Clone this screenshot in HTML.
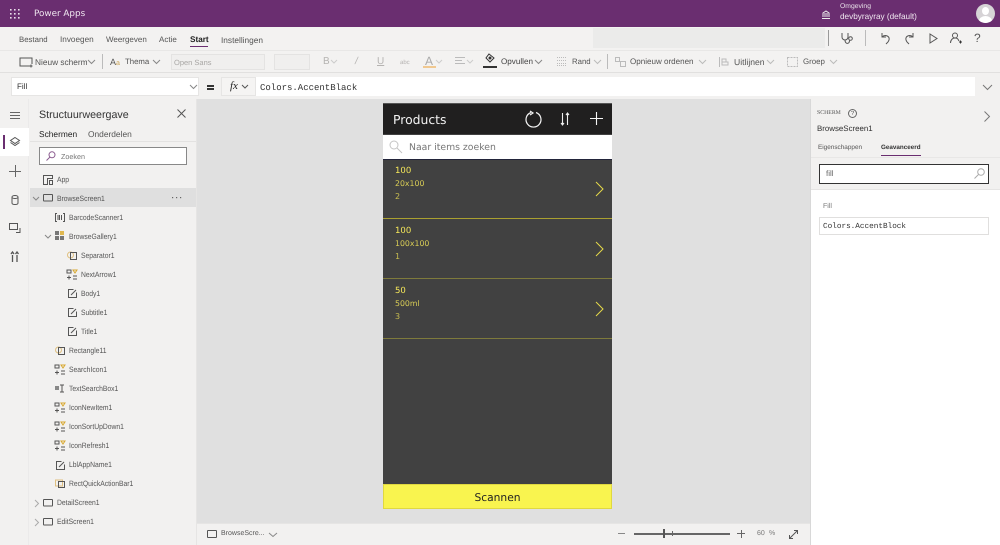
<!DOCTYPE html>
<html><head><meta charset="utf-8">
<style>
html,body{margin:0;padding:0}
body{width:1000px;height:545px;overflow:hidden;position:relative;background:#f2f1f0;font-family:"Liberation Sans",sans-serif;color:#444;text-rendering:geometricPrecision}
.a{position:absolute;white-space:nowrap}
.t{position:absolute;white-space:nowrap;font-family:"Liberation Sans",sans-serif;line-height:12px}
svg{position:absolute;overflow:visible}
.g{color:#b5b3b1}
.s{stroke:#555;fill:none;stroke-width:1}
.n{font-size:8px;color:#555;font-family:"Liberation Sans",sans-serif;position:absolute;white-space:nowrap;line-height:12px}
.r{font-size:7.700px;transform:scaleX(.88);transform-origin:left center}
.d{font-family:"DejaVu Sans",sans-serif}
.m{font-family:"Liberation Mono",monospace}
</style></head><body>
<!-- top bar -->
<div class="a" style="left:0;top:0;width:1000px;height:27px;background:#6a2e70"></div>
<svg style="left:9px;top:8px" width="11" height="11" fill="#eadfeb"><rect x="1" y="1" width="1.6" height="1.6"/><rect x="5" y="1" width="1.6" height="1.6"/><rect x="9" y="1" width="1.6" height="1.6"/><rect x="1" y="5" width="1.6" height="1.6"/><rect x="5" y="5" width="1.6" height="1.6"/><rect x="9" y="5" width="1.6" height="1.6"/><rect x="1" y="9" width="1.6" height="1.6"/><rect x="5" y="9" width="1.6" height="1.6"/><rect x="9" y="9" width="1.6" height="1.6"/></svg>
<div class="t d" style="left:34px;top:8px;font-size:8.800px;color:#f0e8f0">Power Apps</div>
<svg style="left:821px;top:9px" width="10" height="10" stroke="#eee" fill="none"><path d="M1 9.500h8M2 8V4l3-2 3 2v4M4 4v4M6 4v4"/></svg>
<div class="t" style="left:840px;top:1px;font-size:6.800px;color:#e8dfe8">Omgeving</div>
<div class="t" style="left:840px;top:11px;font-size:8.200px;color:#f0e8f0">devbyrayray (default)</div>
<div class="a" style="left:976px;top:4px;width:19px;height:19px;border-radius:50%;background:#d6d3d6;overflow:hidden"><div class="a" style="left:6px;top:3px;width:7px;height:8px;border-radius:50%;background:#fff"></div><div class="a" style="left:3px;top:12px;width:13px;height:10px;border-radius:50%;background:#fff"></div></div>
<!-- menu row -->
<div class="a" style="left:0;top:27px;width:1000px;height:23px;background:#f3f2f1"></div>
<div class="a" style="left:593px;top:28px;width:232px;height:20px;background:#ebebea"></div>
<div class="n" style="left:19px;top:34px;font-size:7.800px">Bestand</div>
<div class="n" style="left:60px;top:34px;font-size:8.200px">Invoegen</div>
<div class="n" style="left:106px;top:34px">Weergeven</div>
<div class="n" style="left:159px;top:34px">Actie</div>
<div class="n" style="left:190px;top:34px;font-weight:bold;color:#222;font-size:8.200px">Start</div>
<div class="a" style="left:190px;top:46px;width:18px;height:1px;background:#6a2e70"></div>
<div class="n" style="left:221px;top:34px;font-size:8.300px">Instellingen</div>
<div class="a" style="left:828px;top:30px;width:1px;height:16px;background:#999"></div>
<div class="a" style="left:865px;top:30px;width:1px;height:16px;background:#bbb"></div>
<svg style="left:840px;top:31px" width="15" height="14"><path class="s" d="M2 2v4a3 3 0 0 0 6 0V2M5 9c0 3 2 4 3.500 3 .8-.5 1-1.500 1-2.500"/><circle class="s" cx="10.500" cy="7.500" r="1.800"/></svg>
<svg style="left:880px;top:32px" width="11" height="13"><path class="s" d="M2 1v4h4M2 5c3-3 8-1 7 3-.5 2-2 3-3 4"/></svg>
<svg style="left:904px;top:32px" width="11" height="13"><path class="s" d="M9 1v4H5M9 5C6 2 1 4 2 8c.5 2 2 3 3 4"/></svg>
<svg style="left:928px;top:33px" width="10" height="11"><path class="s" d="M2 1v9l7-4.500z"/></svg>
<svg style="left:949px;top:32px" width="13" height="13"><circle class="s" cx="6" cy="3.500" r="2.500"/><path class="s" d="M1.500 11c0-3 2-5 4.500-5s3 1 4 3"/><path d="M10 10h3M11.500 8.500v3" stroke="#333"/></svg>
<div class="t" style="left:974px;top:32px;font-size:12px;color:#555">?</div>
<!-- toolbar -->
<div class="a" style="left:0;top:50px;width:1000px;height:23px;background:#f3f2f1;border-top:1px solid #e8e7e6;border-bottom:1px solid #e1e0df;box-sizing:border-box"></div>
<svg style="left:19px;top:57px" width="14" height="11"><path class="s" d="M11 9H1V1h12v6"/><path d="M12 7.500v3M10.500 9h3" stroke="#555"/></svg>
<div class="n" style="left:35px;top:56px;font-size:8.300px">Nieuw scherm</div>
<svg style="left:88px;top:60px" width="7" height="4"><path d="M0 0l3.500 3.500L7 0" fill="none" stroke="#888"/></svg>
<div class="a" style="left:102px;top:54px;width:1px;height:15px;background:#bbb"></div>
<div class="t" style="left:110px;top:56px;font-size:9px;color:#555">A<span style="color:#c9a050;font-size:7px">a</span></div>
<div class="n" style="left:125px;top:56px;font-size:7.800px">Thema</div>
<svg style="left:153px;top:60px" width="7" height="4"><path d="M0 0l3.500 3.500L7 0" fill="none" stroke="#888"/></svg>
<div class="a" style="left:171px;top:54px;width:94px;height:16px;background:#f0efee;border:1px solid #e4e3e2;box-sizing:border-box"></div>
<div class="n" style="left:174px;top:57px;font-size:7.500px;color:#a8a6a4">Open Sans</div>
<div class="a" style="left:274px;top:54px;width:36px;height:16px;background:#f0efee;border:1px solid #e4e3e2;box-sizing:border-box"></div>
<div class="t g" style="left:323px;top:56px;font-size:10px">B</div>
<svg style="left:331px;top:60px" width="6" height="4"><path d="M0 0l3 3 3-3" fill="none" stroke="#ccc"/></svg>
<div class="t g" style="left:355px;top:56px;font-size:10px;font-style:italic">/</div>
<div class="t g" style="left:377px;top:56px;font-size:10px;text-decoration:underline">U</div>
<div class="t g" style="left:400px;top:57px;font-size:6px">abc</div>
<div class="t" style="left:425px;top:55px;font-size:12px;color:#aaa">A</div>
<svg style="left:436px;top:60px" width="6" height="4"><path d="M0 0l3 3 3-3" fill="none" stroke="#ccc"/></svg>
<div class="a" style="left:423px;top:66px;width:13px;height:2px;background:#f0c890"></div>
<svg style="left:455px;top:57px" width="11" height="9" stroke="#bbb"><path d="M0 .5h10M0 3.500h7M0 6.500h10"/></svg>
<svg style="left:467px;top:60px" width="6" height="4"><path d="M0 0l3 3 3-3" fill="none" stroke="#ccc"/></svg>
<svg style="left:484px;top:53px" width="12" height="11"><path d="M5 1l5 4-4 4-4-4z" fill="none" stroke="#333"/><circle cx="6" cy="5" r="1.500" fill="#333"/></svg>
<div class="a" style="left:483px;top:66px;width:14px;height:2px;background:#333"></div>
<div class="n" style="left:501px;top:56px;color:#444;font-size:8.100px">Opvullen</div>
<svg style="left:535px;top:60px" width="7" height="4"><path d="M0 0l3.500 3.500L7 0" fill="none" stroke="#888"/></svg>
<svg style="left:557px;top:57px" width="10" height="9" stroke="#bbb"><path d="M0 .5h9M0 3.500h9M0 6.500h9M0 8.500h9" stroke-dasharray="1 1"/></svg>
<div class="n g" style="left:572px;top:56px;font-size:7.800px">Rand</div>
<svg style="left:594px;top:60px" width="7" height="4"><path d="M0 0l3.500 3.500L7 0" fill="none" stroke="#bbb"/></svg>
<div class="a" style="left:607px;top:54px;width:1px;height:15px;background:#bbb"></div>
<svg style="left:615px;top:57px" width="11" height="10" stroke="#bbb" fill="none"><rect x=".5" y=".5" width="4" height="4"/><rect x="5.500" y="4.500" width="5" height="5"/></svg>
<div class="n g" style="left:630px;top:56px;font-size:8.050px">Opnieuw ordenen</div>
<svg style="left:699px;top:60px" width="7" height="4"><path d="M0 0l3.500 3.500L7 0" fill="none" stroke="#bbb"/></svg>
<svg style="left:719px;top:57px" width="10" height="10" stroke="#bbb" fill="none"><path d="M.5 0v10M3 2h4v3H3zM3 5h6v3H3z"/></svg>
<div class="n g" style="left:734px;top:56px;font-size:8.600px">Uitlijnen</div>
<svg style="left:767px;top:60px" width="7" height="4"><path d="M0 0l3.500 3.500L7 0" fill="none" stroke="#bbb"/></svg>
<svg style="left:787px;top:57px" width="11" height="10" stroke="#bbb" fill="none" stroke-dasharray="2 1"><rect x=".5" y=".5" width="10" height="9"/></svg>
<div class="n g" style="left:803px;top:56px;font-size:7.900px">Groep</div>
<svg style="left:830px;top:60px" width="7" height="4"><path d="M0 0l3.500 3.500L7 0" fill="none" stroke="#bbb"/></svg>
<!-- formula bar -->
<div class="a" style="left:0;top:73px;width:1000px;height:26px;background:#f2f1f0"></div>
<div class="a" style="left:11px;top:77px;width:188px;height:19px;background:#fff;border:1px solid #e6e5e4;box-sizing:border-box"></div>
<div class="t" style="left:17px;top:81px;font-size:8px;color:#333">Fill</div>
<svg style="left:190px;top:85px" width="7" height="4"><path d="M0 0l3.500 3.500L7 0" fill="none" stroke="#888"/></svg>
<div class="a" style="left:207px;top:85px;width:7px;height:1.500px;background:#333"></div>
<div class="a" style="left:207px;top:88px;width:7px;height:1.500px;background:#333"></div>
<div class="a" style="left:221px;top:77px;width:35px;height:19px;background:#f5f4f3;border:1px solid #e6e5e4;box-sizing:border-box"></div>
<div class="t" style="left:230px;top:80px;font-size:11px;font-family:'Liberation Serif',serif;font-style:italic;color:#222">fx</div>
<svg style="left:242px;top:85px" width="6" height="4"><path class="s" d="M0 0l3 3 3-3"/></svg>
<div class="a" style="left:256px;top:77px;width:719px;height:19px;background:#fff"></div>
<div class="t m" style="left:260px;top:81.500px;font-size:9px;color:#333">Colors.AccentBlack</div>
<svg style="left:983px;top:85px" width="9" height="5"><path d="M0 0l4.500 4.500L9 0" fill="none" stroke="#777"/></svg>
<!-- left rail -->
<div class="a" style="left:0;top:99px;width:29px;height:446px;background:#f2f1f0;border-right:1px solid #ebeaea;box-sizing:border-box"></div>
<div class="a" style="left:10px;top:112px;width:10px;height:1px;background:#666"></div>
<div class="a" style="left:10px;top:115px;width:10px;height:1px;background:#666"></div>
<div class="a" style="left:10px;top:118px;width:10px;height:1px;background:#666"></div>
<div class="a" style="left:0;top:128px;width:29px;height:28px;background:#fff"></div>
<div class="a" style="left:3px;top:135px;width:2px;height:14px;background:#6a2e70"></div>
<svg style="left:10px;top:137px" width="10" height="10"><path class="s" d="M5 .5l4.500 3L5 6.500.5 3.500zM.5 5.500l4.500 3 4.500-3"/></svg>
<div class="a" style="left:9px;top:171px;width:12px;height:1px;background:#666"></div>
<div class="a" style="left:14.500px;top:165px;width:1px;height:12px;background:#666"></div>
<svg style="left:11px;top:195px" width="8" height="10"><ellipse class="s" cx="4" cy="2" rx="3" ry="1.500"/><path class="s" d="M1 2v6c0 2 6 2 6 0V2"/></svg>
<svg style="left:9px;top:223px" width="12" height="11"><rect class="s" x=".5" y=".5" width="8" height="6"/><path class="s" d="M7 9.500h4V5"/></svg>
<svg style="left:10px;top:251px" width="10" height="11" stroke="#555" fill="none" stroke-width="1.300"><path d="M2.500 4v7M7 4v7M1 3l1.500-2L4 3M5.500 3L7 1l1.500 2"/></svg>
<!-- tree panel -->
<div class="a" style="left:30px;top:99px;width:166px;height:446px;background:#f2f1f0"></div>
<div class="a" style="left:196px;top:99px;width:1px;height:446px;background:#e6e5e4"></div>
<div class="t" style="left:39px;top:109px;font-size:10.700px;color:#333">Structuurweergave</div>
<svg style="left:177px;top:109px" width="9" height="9"><path d="M.5.500l8 8M8.500.500l-8 8" stroke="#555"/></svg>
<div class="n" style="left:39px;top:128px;color:#222;font-size:8.400px">Schermen</div>
<div class="a" style="left:39px;top:141px;width:39px;height:1px;background:#6a2e70"></div>
<div class="n" style="left:88px;top:128px;font-size:8.400px">Onderdelen</div>
<div class="a" style="left:30px;top:141px;width:166px;height:1px;background:#e3e2e1"></div>
<div class="a" style="left:39px;top:147px;width:148px;height:18px;background:#fff;border:1px solid #888;box-sizing:border-box"></div>
<svg style="left:46px;top:151px" width="10" height="10"><circle cx="6" cy="3.800" r="3" fill="none" stroke="#8a5a8e"/><path d="M4 6L.5 9.500" stroke="#8a5a8e"/></svg>
<div class="n" style="left:61px;top:151px;font-size:7.200px;color:#777">Zoeken</div>
<div class="a" style="left:30px;top:188px;width:166px;height:19px;background:#dfdfdf"></div>
<svg style="left:33px;top:197px" width="6" height="4"><path d="M0 0l3 3 3-3" fill="none" stroke="#888"/></svg>
<svg style="left:172px;top:197px" width="10" height="2" fill="#666"><rect x="0" y="0" width="1.200" height="1.200"/><rect x="4" y="0" width="1.200" height="1.200"/><rect x="8" y="0" width="1.200" height="1.200"/></svg>
<svg style="left:43px;top:175px" width="10" height="10"><path class="s" d="M.5.500h9v3h-5v6h-4zM4.500 3.500v6M6.500 5.500h3v4h-3z"/></svg>
<div class="n r" style="left:57px;top:174px">App</div>
<svg style="left:43px;top:194px" width="10" height="8"><rect class="s" x=".5" y=".5" width="9" height="6.500" rx=".5"/></svg>
<div class="n r" style="left:57px;top:193px">BrowseScreen1</div>
<svg style="left:55px;top:213px" width="10" height="9"><path d="M2 .5H.5v8H2M8 .5h1.500v8H8M3 2v5M4.500 2v5M6.500 2v5" fill="none" stroke="#555"/></svg>
<div class="n r" style="left:69px;top:212px">BarcodeScanner1</div>
<svg style="left:45px;top:235px" width="6" height="4"><path d="M0 0l3 3 3-3" fill="none" stroke="#888"/></svg>
<svg style="left:55px;top:231px" width="10" height="10"><rect x="0" y="0" width="4" height="4" fill="#777"/><rect x="5" y="0" width="4" height="4" fill="#e0b850"/><rect x="0" y="5" width="4" height="4" fill="#777"/><rect x="5" y="5" width="4" height="4" fill="#777"/></svg>
<div class="n r" style="left:69px;top:231px">BrowseGallery1</div>
<!-- sub rows -->
<svg style="left:67px;top:251px" width="11" height="10"><circle cx="3.500" cy="4" r="3" fill="none" stroke="#e0c080"/><rect class="s" x="3.500" y="1.500" width="6" height="7"/></svg>
<div class="n r" style="left:81px;top:250px">Separator1</div>
<svg style="left:67px;top:270px" width="10" height="10"><rect x="0" y="0" width="4" height="3" fill="none" stroke="#555"/><path d="M6 0h4L8 3z" fill="none" stroke="#d8a830"/><path class="s" d="M0 7.500h4M2 5.500v4M6 6h4M6 9h4"/></svg>
<div class="n r" style="left:81px;top:269px">NextArrow1</div>
<svg style="left:68px;top:289px" width="9" height="9"><path class="s" d="M5.500.5H.5v8h8V3.500M3 6l5-5"/></svg>
<div class="n r" style="left:81px;top:288px">Body1</div>
<svg style="left:68px;top:308px" width="9" height="9"><path class="s" d="M5.500.5H.5v8h8V3.500M3 6l5-5"/></svg>
<div class="n r" style="left:81px;top:307px">Subtitle1</div>
<svg style="left:68px;top:327px" width="9" height="9"><path class="s" d="M5.500.5H.5v8h8V3.500M3 6l5-5"/></svg>
<div class="n r" style="left:81px;top:326px">Title1</div>
<svg style="left:55px;top:346px" width="11" height="10"><circle cx="3.500" cy="4" r="3" fill="none" stroke="#e0c080"/><rect class="s" x="3.500" y="1.500" width="6" height="7"/></svg>
<div class="n r" style="left:69px;top:345px">Rectangle11</div>
<svg style="left:55px;top:365px" width="10" height="10"><rect x="0" y="0" width="4" height="3" fill="none" stroke="#555"/><path d="M6 0h4L8 3z" fill="none" stroke="#d8a830"/><path class="s" d="M0 7.500h4M2 5.500v4M6 6h4M6 9h4"/></svg>
<div class="n r" style="left:69px;top:364px">SearchIcon1</div>
<svg style="left:55px;top:384px" width="11" height="9"><rect x="0" y="2" width="4" height="4" fill="#888"/><path class="s" d="M5 1h4M5 8h4M7 1v7"/></svg>
<div class="n r" style="left:69px;top:383px">TextSearchBox1</div>
<svg style="left:55px;top:403px" width="10" height="10"><rect x="0" y="0" width="4" height="3" fill="none" stroke="#555"/><path d="M6 0h4L8 3z" fill="none" stroke="#d8a830"/><path class="s" d="M0 7.500h4M2 5.500v4M6 6h4M6 9h4"/></svg>
<div class="n r" style="left:69px;top:402px">IconNewItem1</div>
<svg style="left:55px;top:422px" width="10" height="10"><rect x="0" y="0" width="4" height="3" fill="none" stroke="#555"/><path d="M6 0h4L8 3z" fill="none" stroke="#d8a830"/><path class="s" d="M0 7.500h4M2 5.500v4M6 6h4M6 9h4"/></svg>
<div class="n r" style="left:69px;top:421px">IconSortUpDown1</div>
<svg style="left:55px;top:441px" width="10" height="10"><rect x="0" y="0" width="4" height="3" fill="none" stroke="#555"/><path d="M6 0h4L8 3z" fill="none" stroke="#d8a830"/><path class="s" d="M0 7.500h4M2 5.500v4M6 6h4M6 9h4"/></svg>
<div class="n r" style="left:69px;top:440px">IconRefresh1</div>
<svg style="left:56px;top:461px" width="9" height="9"><path class="s" d="M5.500.5H.5v8h8V3.500M3 6l5-5"/></svg>
<div class="n r" style="left:69px;top:459px">LblAppName1</div>
<svg style="left:55px;top:479px" width="11" height="10"><rect x=".5" y="1" width="7" height="6" fill="none" stroke="#e0c080"/><rect class="s" x="3.500" y="2.500" width="6" height="6"/></svg>
<div class="n r" style="left:69px;top:478px">RectQuickActionBar1</div>
<svg style="left:35px;top:500px" width="4" height="7"><path d="M0 0l3.500 3.500L0 7" fill="none" stroke="#aaa"/></svg>
<svg style="left:43px;top:499px" width="10" height="8"><rect class="s" x=".5" y=".5" width="9" height="6.500" rx=".5"/></svg>
<div class="n r" style="left:57px;top:497px">DetailScreen1</div>
<svg style="left:35px;top:519px" width="4" height="7"><path d="M0 0l3.500 3.500L0 7" fill="none" stroke="#aaa"/></svg>
<svg style="left:43px;top:518px" width="10" height="8"><rect class="s" x=".5" y=".5" width="9" height="6.500" rx=".5"/></svg>
<div class="n r" style="left:57px;top:516px">EditScreen1</div>
<!-- canvas -->
<div class="a" style="left:197px;top:99px;width:613px;height:424px;background:#e0e0e0"></div>
<div class="a" style="left:197px;top:523px;width:613px;height:22px;background:#f2f1f0;border-top:1px solid #e6e5e4;box-sizing:border-box"></div>
<svg style="left:207px;top:530px" width="10" height="9"><rect class="s" x=".5" y=".5" width="9" height="7" rx=".5"/></svg>
<div class="n" style="left:221px;top:528px;font-size:7px">BrowseScre...</div>
<svg style="left:269px;top:533px" width="8" height="4"><path d="M0 0l4 3.500L8 0" fill="none" stroke="#888"/></svg>
<div class="a" style="left:618px;top:533px;width:7px;height:1px;background:#888"></div>
<div class="a" style="left:634px;top:533px;width:96px;height:1.500px;background:#666"></div>
<div class="a" style="left:663px;top:529px;width:2px;height:9px;background:#555"></div>
<div class="a" style="left:671.500px;top:531px;width:1px;height:5px;background:#666"></div>
<div class="a" style="left:737px;top:533px;width:8px;height:1px;background:#666"></div>
<div class="a" style="left:740.500px;top:530px;width:1px;height:8px;background:#666"></div>
<div class="n" style="left:757px;top:528px;font-size:7px;color:#777">60</div>
<div class="n" style="left:769px;top:528px;font-size:7px;color:#777">%</div>
<svg style="left:789px;top:530px" width="9" height="9"><path d="M.5 8.500l8-8M5 .5h3.500V4M.5 5v3.500H4" fill="none" stroke="#555"/></svg>
<!-- phone -->
<div class="a" style="left:383px;top:103px;width:229px;height:406px;background:#414141"></div>
<div class="a" style="left:383px;top:103px;width:229px;height:31px;background:#201f1f;border-top:1px solid #555;box-sizing:border-box"></div>
<div class="t d" style="left:393px;top:113px;font-size:12.400px;color:#f2f2f2;line-height:14px">Products</div>
<svg style="left:525px;top:110px" width="18" height="18"><path d="M6 2.500a7.500 7.500 0 1 0 5 0" fill="none" stroke="#f2f2f2" stroke-width="1.200"/><path d="M5 1l3 2-3 2" fill="none" stroke="#f2f2f2" stroke-width="1.200"/></svg>
<svg style="left:560px;top:112px" width="10" height="14"><path d="M2.500 1v12M7.500 1v12M1 11l1.500 2L4 11M6 3l1.500-2L9 3" fill="none" stroke="#eee" stroke-width="1.100"/></svg>
<svg style="left:590px;top:112px" width="13" height="13"><path d="M6.500 0v13M0 6.500h13" stroke="#f5f5f5" stroke-width="1.100"/></svg>
<div class="a" style="left:383px;top:135px;width:229px;height:24px;background:#fff"></div>
<div class="a" style="left:383px;top:159px;width:229px;height:1px;background:#22243a"></div>
<svg style="left:389px;top:140px" width="13" height="13"><circle cx="5" cy="5" r="4" fill="none" stroke="#c4c4c4"/><path d="M8 8l5 5" stroke="#c4c4c4"/></svg>
<div class="t d" style="left:409px;top:142px;font-size:9.300px;color:#777">Naar items zoeken</div>
<!-- gallery rows -->
<div class="t d" style="left:395px;top:165px;font-size:8.500px;color:#f6e85a">100</div>
<div class="t d" style="left:395px;top:178px;font-size:7.800px;color:#d8cc55">20x100</div>
<div class="t d" style="left:395px;top:191px;font-size:8px;color:#c8bc50">2</div>
<svg style="left:595px;top:181px" width="9" height="16"><path d="M1 1l7 7-7 7" fill="none" stroke="#e6da4a" stroke-width="1"/></svg>
<div class="a" style="left:383px;top:218px;width:229px;height:1px;background:#aaa030"></div>
<div class="t d" style="left:395px;top:225px;font-size:8.500px;color:#f6e85a">100</div>
<div class="t d" style="left:395px;top:238px;font-size:7.800px;color:#d8cc55">100x100</div>
<div class="t d" style="left:395px;top:251px;font-size:8px;color:#c8bc50">1</div>
<svg style="left:595px;top:241px" width="9" height="16"><path d="M1 1l7 7-7 7" fill="none" stroke="#e6da4a" stroke-width="1"/></svg>
<div class="a" style="left:383px;top:278px;width:229px;height:1px;background:#7e7a3c"></div>
<div class="t d" style="left:395px;top:285px;font-size:8.500px;color:#f6e85a">50</div>
<div class="t d" style="left:395px;top:298px;font-size:7.800px;color:#d8cc55">500ml</div>
<div class="t d" style="left:395px;top:311px;font-size:8px;color:#c8bc50">3</div>
<svg style="left:595px;top:301px" width="9" height="16"><path d="M1 1l7 7-7 7" fill="none" stroke="#e6da4a" stroke-width="1"/></svg>
<div class="a" style="left:383px;top:338px;width:229px;height:1px;background:#7e7a3c"></div>
<div class="a" style="left:383px;top:484px;width:229px;height:25px;background:#f9f44f;border:1px solid #e0d840;box-sizing:border-box"></div>
<div class="t d" style="left:383px;width:229px;text-align:center;top:491px;font-size:10.700px;color:#222;line-height:13px">Scannen</div>
<!-- right panel -->
<div class="a" style="left:810px;top:99px;width:190px;height:446px;background:#fff;border-left:1px solid #d8d8d8;box-sizing:border-box"></div>
<div class="a" style="left:811px;top:99px;width:189px;height:58px;background:#f2f1f0"></div>
<div class="a" style="left:811px;top:157px;width:189px;height:33px;background:#f2f1f0;border-top:1px solid #e8e7e6;border-bottom:1px solid #e6e5e4;box-sizing:border-box"></div>
<div class="n" style="left:817px;top:107px;font-size:5.800px;color:#555;font-family:'Liberation Serif',serif">SCHERM</div>
<div class="a" style="left:848px;top:109px;width:9px;height:9px;border:1px solid #666;border-radius:50%;box-sizing:border-box;font:6px/8px 'Liberation Sans',sans-serif;text-align:center;color:#555">?</div>
<svg style="left:984px;top:111px" width="6" height="11"><path d="M.5.500l5 5-5 5" fill="none" stroke="#777"/></svg>
<div class="n" style="left:817px;top:123px;font-size:7.900px;color:#333">BrowseScreen1</div>
<div class="n" style="left:818px;top:142px;font-size:6.400px">Eigenschappen</div>
<div class="n" style="left:881px;top:142px;font-size:6.300px;font-weight:bold;color:#333">Geavanceerd</div>
<div class="a" style="left:881px;top:155px;width:40px;height:1px;background:#6a2e70"></div>
<div class="a" style="left:819px;top:164px;width:170px;height:20px;background:#fff;border:1px solid #333;box-sizing:border-box"></div>
<div class="n" style="left:826px;top:168px;font-size:8px;color:#666">fill</div>
<svg style="left:974px;top:168px" width="11" height="11"><circle cx="7" cy="4" r="3.300" fill="none" stroke="#aaa"/><path d="M4.500 6.500L.5 10.500" stroke="#aaa"/></svg>
<div class="n" style="left:823px;top:201px;font-size:7px;color:#777">Fill</div>
<div class="a" style="left:819px;top:217px;width:170px;height:18px;background:#fff;border:1px solid #e0dfde;box-sizing:border-box"></div>
<div class="t m" style="left:823px;top:221px;font-size:7.700px;color:#333">Colors.AccentBlock</div>
</body></html>
